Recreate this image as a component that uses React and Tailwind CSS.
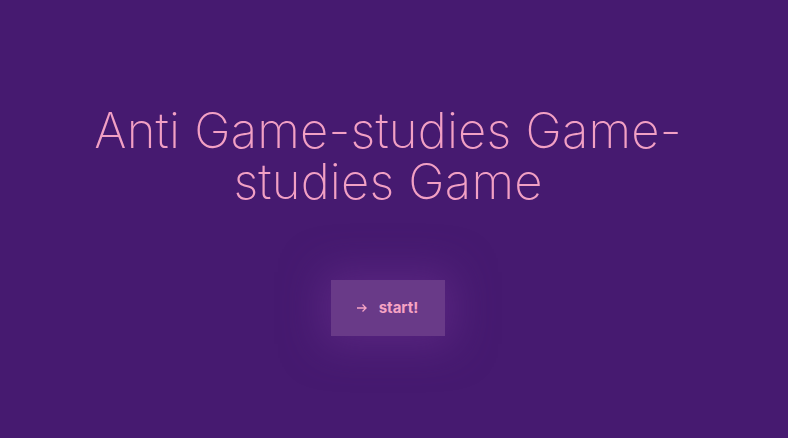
export default function App() {
  return (
    <div className="w-full h-[438px] bg-[#461a70] flex flex-col items-center overflow-hidden">
      <h1 className="mt-[105px] w-[640px] text-center text-[#f2a0c4] text-[49px] leading-[51px] font-extralight tracking-[0.2px] font-['Inter',sans-serif] mr-[12px]">
        Anti Game-studies Game-studies Game
      </h1>
      <button className="mt-[73px] w-[114px] h-[56px] bg-[#693a88] shadow-[0_0_40px_8px_rgba(110,50,145,0.5)] flex items-center justify-center gap-[11px] text-[#f6a4c4] text-[15px] font-bold font-['Inter',sans-serif] mr-[12px] pr-[2px]">
        <svg width="12" height="12" viewBox="0 0 12 12" fill="none" stroke="currentColor" strokeWidth="1.3">
          <path d="M1 6h9.5M6.5 2.5 10 6 6.5 9.5" />
        </svg>
        <span>start!</span>
      </button>
    </div>
  );
}
